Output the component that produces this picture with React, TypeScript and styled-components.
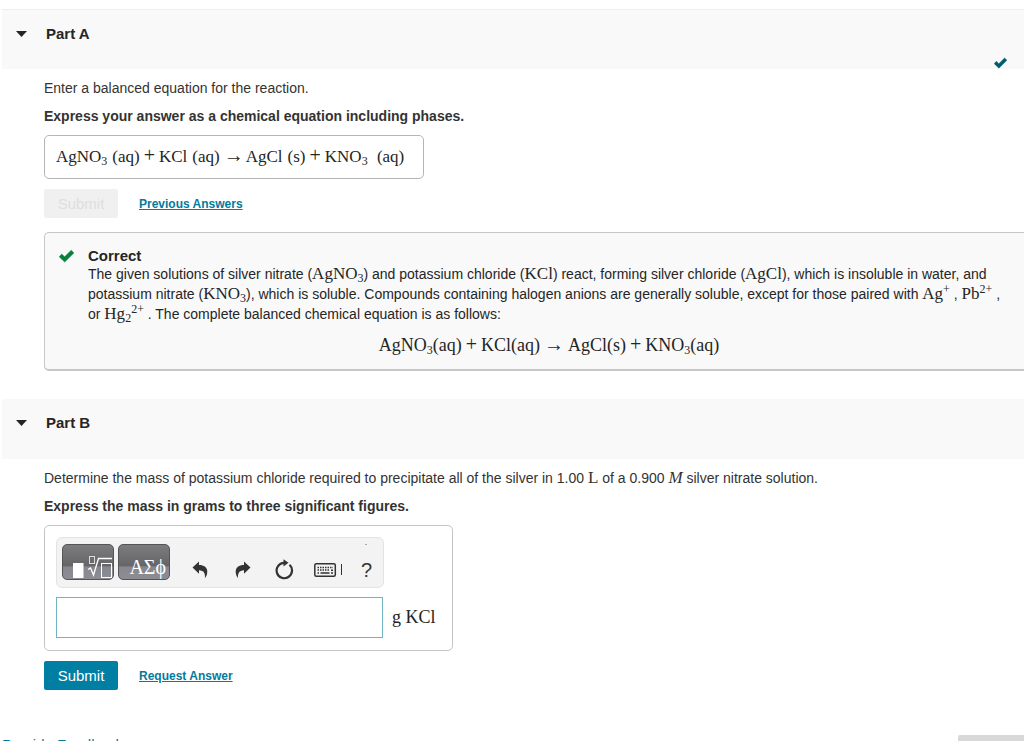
import React from "react";
import styled, { createGlobalStyle } from "styled-components";

const SANS = '"Liberation Sans", Helvetica, Arial, sans-serif';
const SERIF = '"Liberation Serif", "Times New Roman", serif';

const GlobalStyle = createGlobalStyle`
  *, *::before, *::after { box-sizing: border-box; }
  body {
    margin: 0;
    background: #fff;
    color: #252525;
    font-family: ${SANS};
    font-size: 14px;
    line-height: 20px;
  }
  button, input { font-family: inherit; margin: 0; }
`;

const Page = styled.main`
  height: 100vh;
  overflow: hidden;
  padding: 9px 0 0 2px;
`;

const Part = styled.section`
  margin-bottom: 28px;
`;

const PartHeader = styled.header<{ $ruled?: boolean }>`
  display: flex;
  justify-content: space-between;
  height: 60px;
  padding: 14px 17px 0 13px;
  background: #f9f9f9;
  border-top: ${(p) => (p.$ruled ? "1px solid #eee" : "0")};
`;

const HeaderMark = styled.span`
  display: flex;
  align-self: flex-end;
`;

const Toggle = styled.button`
  display: flex;
  align-items: center;
  gap: 18px;
  align-self: flex-start;
  padding: 0;
  border: 0;
  background: none;
  color: #252525;
  font-size: 15px;
  font-weight: bold;
  line-height: 20px;
`;

const Body = styled.div`
  padding: 9px 0 0 42px;
`;

const Prompt = styled.p<{ $bold?: boolean }>`
  margin: 0 0 ${(p) => (p.$bold ? "9px" : "8px")};
  color: #333;
  font-weight: ${(p) => (p.$bold ? "bold" : "normal")};
`;

const AnswerBox = styled.div`
  display: flex;
  align-items: center;
  width: 380px;
  height: 44px;
  padding: 0 11px 2px;
  border: 1px solid #b5b5b5;
  border-radius: 5px;
`;

const Math = styled.span<{ $display?: boolean }>`
  font-family: ${SERIF};
  font-size: ${(p) => (p.$display ? "18px" : "17px")};
  line-height: 1;
  white-space: nowrap;

  sub, sup {
    font-size: 12px;
    line-height: 0;
  }
  sub { vertical-align: -3px; }
  sup { vertical-align: 6px; }
`;

const Op = styled.span`
  margin: 0 4px;
  font-size: 20px;
  line-height: 0;
`;

const Arrow = styled(Op)<{ $tight?: boolean }>`
  margin: 0 ${(p) => (p.$tight ? "2px" : "4px")} 0 4px;
`;

const Phase = styled.span`
  margin-left: 5px;
`;

const Actions = styled.div`
  display: flex;
  align-items: center;
  gap: 21px;
  margin: 10px 0 14px;
`;

const SubmitButton = styled.button`
  width: 74px;
  height: 29px;
  padding: 0;
  border: 0;
  border-radius: 2px;
  background: #007fa3;
  color: #fff;
  font-size: 15px;

  &:disabled {
    background: #f0f0f0;
    color: #dedede;
  }
`;

const ActionLink = styled.a`
  color: #047a9c;
  font-size: 12px;
  font-weight: bold;
`;

const Feedback = styled.div`
  display: flex;
  gap: 14px;
  padding: 14px 14px 13px;
  border: 1px solid #c7c7c7;
  border-right: 0;
  border-bottom: 2px solid #c7c7c7;
  border-radius: 5px 0 0 5px;
  background: #f9f9f9;

  > svg { flex: none; margin-top: 1px; }
`;

const FeedbackText = styled.div`
  flex: 1;
`;

const FeedbackTitle = styled.h3`
  margin: 0;
  font-size: 15px;
  line-height: 17px;
`;

const FeedbackCopy = styled.p`
  margin: 0;
`;

const Equation = styled.div`
  margin-top: 12px;
  text-align: center;
`;

const EntryBox = styled.div`
  width: 409px;
  padding: 11px 11px 12px;
  border: 1px solid #c4c4c4;
  border-radius: 5px;
`;

const Toolbar = styled.div`
  display: flex;
  align-items: flex-start;
  width: 328px;
  height: 51px;
  margin-bottom: 9px;
  padding: 6px 0 0 5px;
  border: 1px solid #e3e3e3;
  border-radius: 6px;
  background: #f3f3f3;
`;

const PaletteButton = styled.button<{ $flush?: boolean }>`
  display: flex;
  flex: none;
  align-items: flex-end;
  justify-content: flex-end;
  width: 52px;
  height: 36px;
  margin-right: 4px;
  padding: 0 ${(p) => (p.$flush ? "0" : "3px")} 0 0;
  border: 1px solid #555;
  border-radius: 5px;
  background: linear-gradient(#7c7c7f, #656568 62%, #87878f 64%, #8c8c94);
  color: #fff;
  font-family: ${SERIF};
  font-size: 20px;
  line-height: 23px;
`;

const ToolButton = styled.button<{ $width: number }>`
  display: flex;
  flex: none;
  align-items: center;
  justify-content: center;
  width: ${(p) => p.$width}px;
  height: 36px;
  padding: 15px 0 0;
  border: 0;
  background: none;
  color: #333;
  font-size: 20px;
  line-height: 20px;
`;

const HelpButton = styled(ToolButton)`
  position: relative;

  &::before {
    content: "";
    position: absolute;
    top: 0;
    left: 15px;
    width: 2px;
    height: 1px;
    background: #aaa;
  }
`;

const EntryRow = styled.div`
  display: flex;
  align-items: center;
  gap: 9px;
`;

const AnswerInput = styled.input`
  width: 327px;
  height: 41px;
  border: 1px solid #6fb4c4;
  background: #fff;
`;

const Footer = styled.footer`
  display: flex;
  align-items: flex-start;
  justify-content: space-between;
  margin-top: 45px;
`;

const FeedbackLink = styled.a`
  color: #047a9c;
  font-size: 15px;
  line-height: 20px;
  text-decoration: none;
`;

const FooterTab = styled.div`
  width: 66px;
  height: 30px;
  border-radius: 2px 0 0 0;
  background: #d8d8d8;
`;

const Caret = () => (
  <svg width="13" height="8" viewBox="0 0 13 8" aria-hidden="true">
    <path d="M1 1H12L6.500 7Z" fill="#252525" />
  </svg>
);

const Check = ({ color, size }: { color: string; size: number }) => (
  <svg width={size} height={size} viewBox="0 0 15 14" aria-hidden="true">
    <path
      d="M0.200 8.300L2.700 5.600L5.600 8.300L12.200 1.800L14.900 4.400L5.700 13.500Z"
      fill={color}
      stroke={color}
      strokeWidth="0.500"
      strokeLinejoin="round"
    />
  </svg>
);

const TemplateIcon = () => (
  <svg width="40" height="26" viewBox="0 0 40 26" fill="none" stroke="#fff" aria-hidden="true">
    <rect x="0" y="10" width="10.500" height="15" fill="#fff" stroke="none" />
    <rect x="16.500" y="3.500" width="5" height="7" stroke="#ddd" />
    <path d="M15 16.500L17.500 15L20.500 22L25.500 5.500H39" strokeWidth="1.300" />
    <rect x="28.500" y="10.500" width="10" height="14" />
  </svg>
);

const Undo = ({ flip }: { flip?: boolean }) => (
  <svg width="16" height="18" viewBox="0 0 16 18" aria-hidden="true">
    <path
      transform={flip ? "matrix(-1 0 0 1 16 0)" : undefined}
      d="M0.500 6.500L7 0.500V4C12 4 15.500 6.500 15.300 11C15.200 13.500 14.300 15.500 12.900 17.200C13.400 12.500 12 9.500 7 9.300V12.800Z"
      fill="#333"
    />
  </svg>
);

const Reset = () => (
  <svg width="20" height="21" viewBox="0 0 20 21" aria-hidden="true">
    <path d="M15.500 5.800A7.700 7.700 0 1 1 10 3.800" fill="none" stroke="#333" strokeWidth="2.200" />
    <path d="M9.500 0.300L14.500 3.800L9.500 7.500Z" fill="#333" />
  </svg>
);

const Keyboard = () => (
  <svg width="30" height="14" viewBox="0 0 30 14" aria-hidden="true">
    <rect x="0.800" y="0.800" width="20.500" height="12.400" rx="1.500" fill="none" stroke="#333" strokeWidth="1.500" />
    <path d="M3.500 4.500H19M3.500 7H15" stroke="#333" strokeWidth="1.500" strokeDasharray="1.500 1" />
    <path d="M17 7.200H19M3.500 10H5M6.500 10H15.500M17 10H19" stroke="#333" strokeWidth="1.500" />
    <path d="M27.500 1V12" stroke="#333" />
  </svg>
);

export default function App() {
  return (
    <>
      <GlobalStyle />
      <Page>
        <Part>
          <PartHeader $ruled>
            <Toggle aria-expanded="true">
              <Caret />
              Part A
            </Toggle>
            <HeaderMark>
              <Check color="#005a70" size={13} />
            </HeaderMark>
          </PartHeader>
          <Body>
            <Prompt>Enter a balanced equation for the reaction.</Prompt>
            <Prompt $bold>Express your answer as a chemical equation including phases.</Prompt>
            <AnswerBox>
              <Math>
                AgNO<sub>3</sub><Phase>(aq)</Phase>
                <Op>+</Op>KCl<Phase>(aq)</Phase>
                <Arrow $tight>→</Arrow>AgCl<Phase>(s)</Phase>
                <Op>+</Op>KNO<sub>3</sub> <Phase>(aq)</Phase>
              </Math>
            </AnswerBox>
            <Actions>
              <SubmitButton disabled>Submit</SubmitButton>
              <ActionLink href="#previous">Previous Answers</ActionLink>
            </Actions>
            <Feedback>
              <Check color="#038238" size={15} />
              <FeedbackText>
                <FeedbackTitle>Correct</FeedbackTitle>
                <FeedbackCopy>
                  The given solutions of silver nitrate (<Math>AgNO<sub>3</sub></Math>) and potassium chloride (
                  <Math>KCl</Math>) react, forming silver chloride (<Math>AgCl</Math>), which is insoluble in
                  water, and potassium nitrate (<Math>KNO<sub>3</sub></Math>), which is soluble. Compounds
                  containing halogen anions are generally soluble, except for those paired with{" "}
                  <Math>Ag<sup>+</sup></Math> , <Math>Pb<sup>2+</sup></Math> , or{" "}
                  <Math>Hg<sub>2</sub><sup>2+</sup></Math> . The complete balanced chemical equation is as
                  follows:
                </FeedbackCopy>
                <Equation>
                  <Math $display>
                    AgNO<sub>3</sub>(aq)<Op>+</Op>KCl(aq)<Arrow>→</Arrow>AgCl(s)<Op>+</Op>KNO<sub>3</sub>(aq)
                  </Math>
                </Equation>
              </FeedbackText>
            </Feedback>
          </Body>
        </Part>
        <Part>
          <PartHeader>
            <Toggle aria-expanded="true">
              <Caret />
              Part B
            </Toggle>
          </PartHeader>
          <Body>
            <Prompt>
              Determine the mass of potassium chloride required to precipitate all of the silver in 1.00{" "}
              <Math>L</Math> of a 0.900 <Math><i>M</i></Math> silver nitrate solution.
            </Prompt>
            <Prompt $bold>Express the mass in grams to three significant figures.</Prompt>
            <EntryBox>
              <Toolbar role="toolbar" aria-label="Equation tools">
                <PaletteButton $flush aria-label="Templates">
                  <TemplateIcon />
                </PaletteButton>
                <PaletteButton aria-label="Symbols">ΑΣϕ</PaletteButton>
                <ToolButton $width={52} aria-label="Undo"><Undo /></ToolButton>
                <ToolButton $width={34} aria-label="Redo"><Undo flip /></ToolButton>
                <ToolButton $width={48} aria-label="Reset"><Reset /></ToolButton>
                <ToolButton $width={42} aria-label="Keyboard shortcuts"><Keyboard /></ToolButton>
                <HelpButton $width={33} aria-label="Help">?</HelpButton>
              </Toolbar>
              <EntryRow>
                <AnswerInput id="mass" aria-label="Mass in grams" />
                <label htmlFor="mass"><Math $display>g KCl</Math></label>
              </EntryRow>
            </EntryBox>
            <Actions>
              <SubmitButton>Submit</SubmitButton>
              <ActionLink href="#request">Request Answer</ActionLink>
            </Actions>
          </Body>
          <Footer>
            <FeedbackLink href="#feedback">Provide Feedback</FeedbackLink>
            <FooterTab />
          </Footer>
        </Part>
      </Page>
    </>
  );
}
